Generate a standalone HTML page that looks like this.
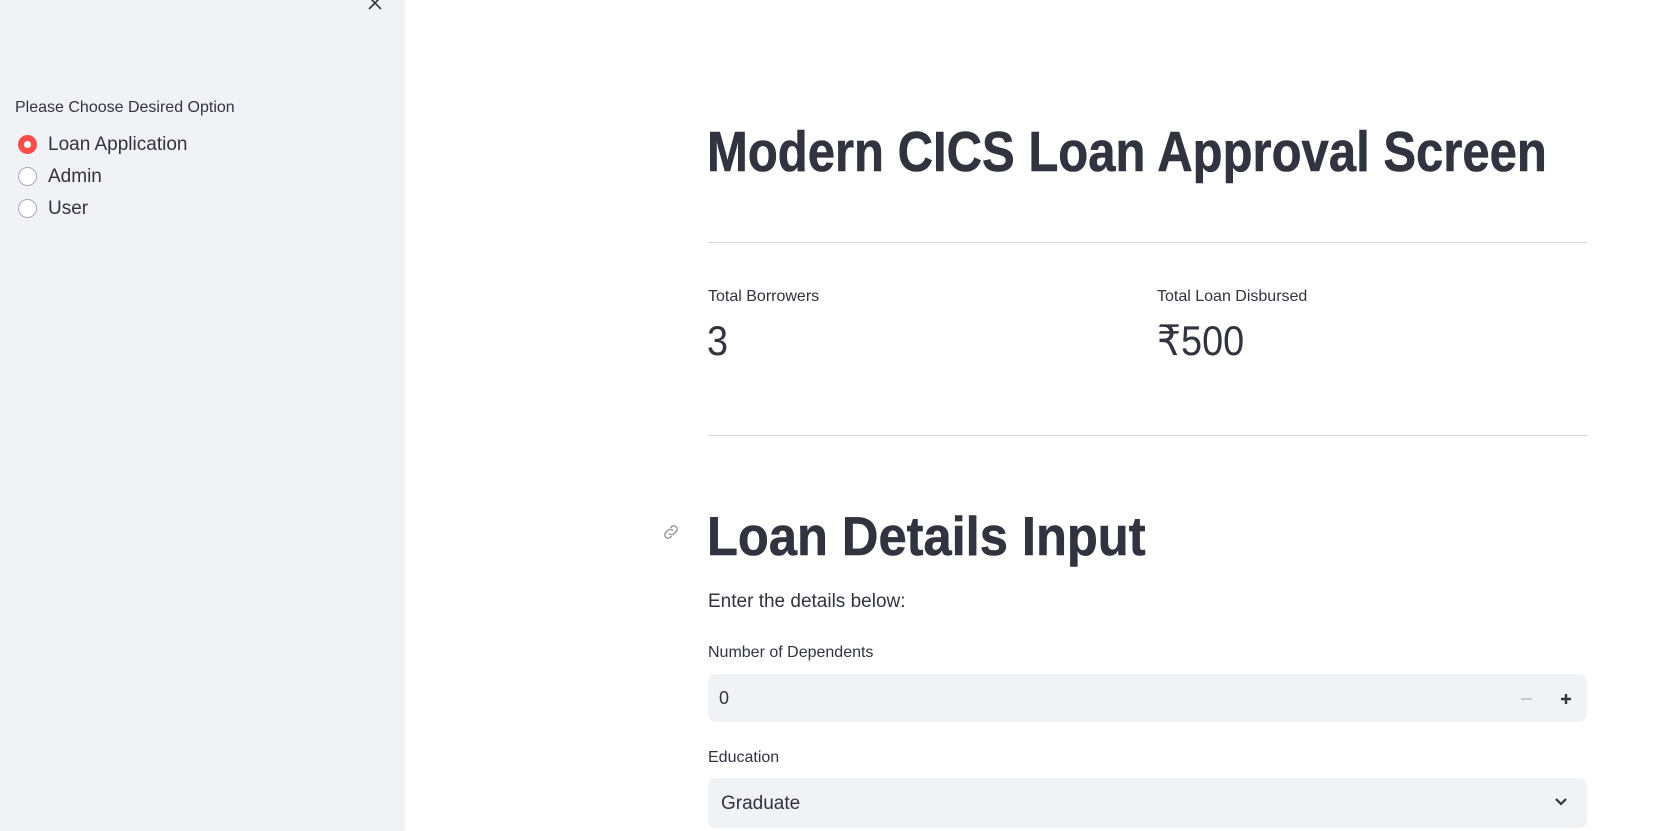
<!DOCTYPE html>
<html><head><meta charset="utf-8"><style>
*{margin:0;padding:0;box-sizing:border-box}
body{width:1661px;height:831px;overflow:hidden;background:#fff;font-family:"Liberation Sans",sans-serif;color:#31333f;position:relative}
.sb{position:absolute;left:0;top:0;width:405px;height:831px;background:#f0f2f6}
.t{position:absolute;white-space:nowrap;transform-origin:left center;line-height:1}
.radio{position:absolute;width:19px;height:19px;border-radius:50%;border:1.5px solid #a3a8b4;background:#fff}
.radio.on{background:#ff4b4b;border:none}
.radio.on::after{content:"";position:absolute;left:6px;top:6px;width:7px;height:7px;border-radius:50%;background:#fff}
.hr{position:absolute;left:708px;width:879px;height:1px;background:#d5d6d9}
.box{position:absolute;left:708px;width:879px;background:#f0f2f6;border-radius:8px}
</style></head><body>
<div class="sb"></div>
<svg style="position:absolute;left:368px;top:-4px" width="14" height="14" viewBox="0 0 14 14"><path d="M1 1L13 13M13 1L1 13" stroke="#31333f" stroke-width="1.6"/></svg>
<div class="t" style="left:15px;top:100px;font-size:16px">Please Choose Desired Option</div>
<div class="radio on" style="left:18px;top:135px"></div>
<div class="radio" style="left:18px;top:167px"></div>
<div class="radio" style="left:18px;top:199px"></div>
<div class="t" style="left:48px;top:135px;font-size:19px">Loan Application</div>
<div class="t" style="left:48px;top:167px;font-size:19px">Admin</div>
<div class="t" style="left:48px;top:199px;font-size:19px">User</div>

<div class="t" style="left:707px;top:124px;font-size:57px;font-weight:bold;transform:scaleX(.86);-webkit-text-stroke:0.6px #31333f">Modern CICS Loan Approval Screen</div>
<div class="hr" style="top:242px"></div>
<div class="t" style="left:708px;top:289px;font-size:16px">Total Borrowers</div>
<div class="t" style="left:1157px;top:289px;font-size:16px">Total Loan Disbursed</div>
<div class="t" style="left:707px;top:320px;font-size:42px;font-weight:300;transform:scaleX(.9)">3</div>
<div class="t" style="left:1157px;top:320px;font-size:42px;font-weight:300;transform:scaleX(.9)">₹500</div>
<div class="hr" style="top:435px"></div>

<svg style="position:absolute;left:661px;top:522px" width="20" height="20" viewBox="0 0 24 24" fill="none" stroke="#8a8d96" stroke-width="1.6" stroke-linecap="round"><path d="M10 14a4 4 0 0 0 5.6 0l3-3a4 4 0 0 0-5.6-5.6l-1.2 1.2"/><path d="M14 10a4 4 0 0 0-5.6 0l-3 3a4 4 0 0 0 5.6 5.6l1.2-1.2"/></svg>
<div class="t" style="left:707px;top:509px;font-size:55px;font-weight:bold;transform:scaleX(.92);-webkit-text-stroke:0.6px #31333f">Loan Details Input</div>
<div class="t" style="left:708px;top:592px;font-size:19px">Enter the details below:</div>
<div class="t" style="left:708px;top:645px;font-size:16px">Number of Dependents</div>
<div class="box" style="top:674px;height:48px"></div>
<div class="t" style="left:719px;top:689px;font-size:18px">0</div>
<div style="position:absolute;left:1521px;top:698px;width:11px;height:2px;background:#c9ccd4"></div>
<svg style="position:absolute;left:1560px;top:693px" width="12" height="12" viewBox="0 0 12 12"><path d="M6 1V11M1 6H11" stroke="#31333f" stroke-width="2.4"/></svg>
<div class="t" style="left:708px;top:750px;font-size:16px">Education</div>
<div class="box" style="top:778px;height:50px"></div>
<div class="t" style="left:721px;top:794px;font-size:19px">Graduate</div>
<svg style="position:absolute;left:1554px;top:797px" width="14" height="10" viewBox="0 0 14 10"><path d="M2 2L7 7L12 2" stroke="#31333f" stroke-width="2.2" fill="none"/></svg>
</body></html>
